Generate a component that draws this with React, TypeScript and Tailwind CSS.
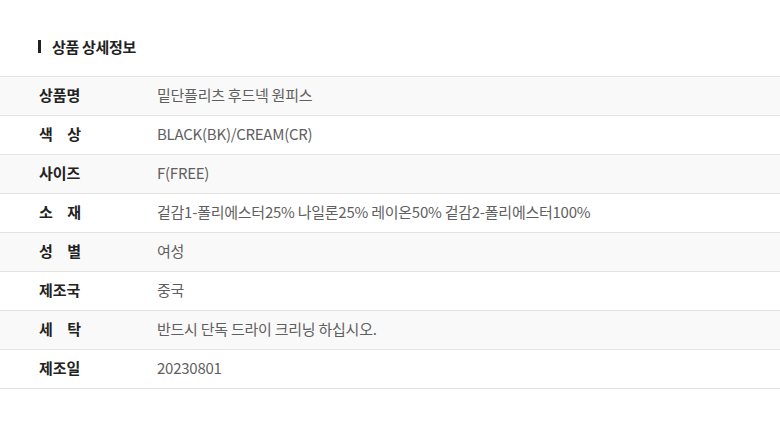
import React from "react";

const rows: { label: string[]; value: string }[] = [
  { label: ["상품명"], value: "밑단플리츠 후드넥 원피스" },
  { label: ["색", "상"], value: "BLACK(BK)/CREAM(CR)" },
  { label: ["사이즈"], value: "F(FREE)" },
  { label: ["소", "재"], value: "겉감1-폴리에스터25% 나일론25% 레이온50% 겉감2-폴리에스터100%" },
  { label: ["성", "별"], value: "여성" },
  { label: ["제조국"], value: "중국" },
  { label: ["세", "탁"], value: "반드시 단독 드라이 크리닝 하십시오." },
  { label: ["제조일"], value: "20230801" },
];

export default function App() {
  return (
    <div
      className="w-[780px] h-[427px] bg-white overflow-hidden"
      style={{ fontFamily: '"Noto Sans CJK KR", "Noto Sans", sans-serif' }}
    >
      <div className="h-[76px] flex items-center pl-[38px] pt-[17px]">
        <span className="w-[3px] h-[13px] bg-[#222] mr-[11px]" />
        <span className="text-[15px] font-bold text-[#222] leading-none tracking-[-0.3px]">상품 상세정보</span>
      </div>
      <div className="border-t border-[#e3e3e3]">
        {rows.map((r, i) => (
          <div
            key={i}
            className={`h-[39px] border-b border-[#e3e3e3] flex items-center pb-[3px] ${i % 2 === 0 ? "bg-[#f9f9f9]" : "bg-white"}`}
          >
            <div className="w-[157px] pl-[39px] shrink-0">
              <div className="w-[42px] flex justify-between text-[15px] font-bold text-[#222] leading-none">
                {r.label.map((l, j) => (
                  <span key={j}>{l}</span>
                ))}
              </div>
            </div>
            <div className="text-[15px] text-[#5f5f5f] leading-none tracking-[-0.25px]">{r.value}</div>
          </div>
        ))}
      </div>
    </div>
  );
}
